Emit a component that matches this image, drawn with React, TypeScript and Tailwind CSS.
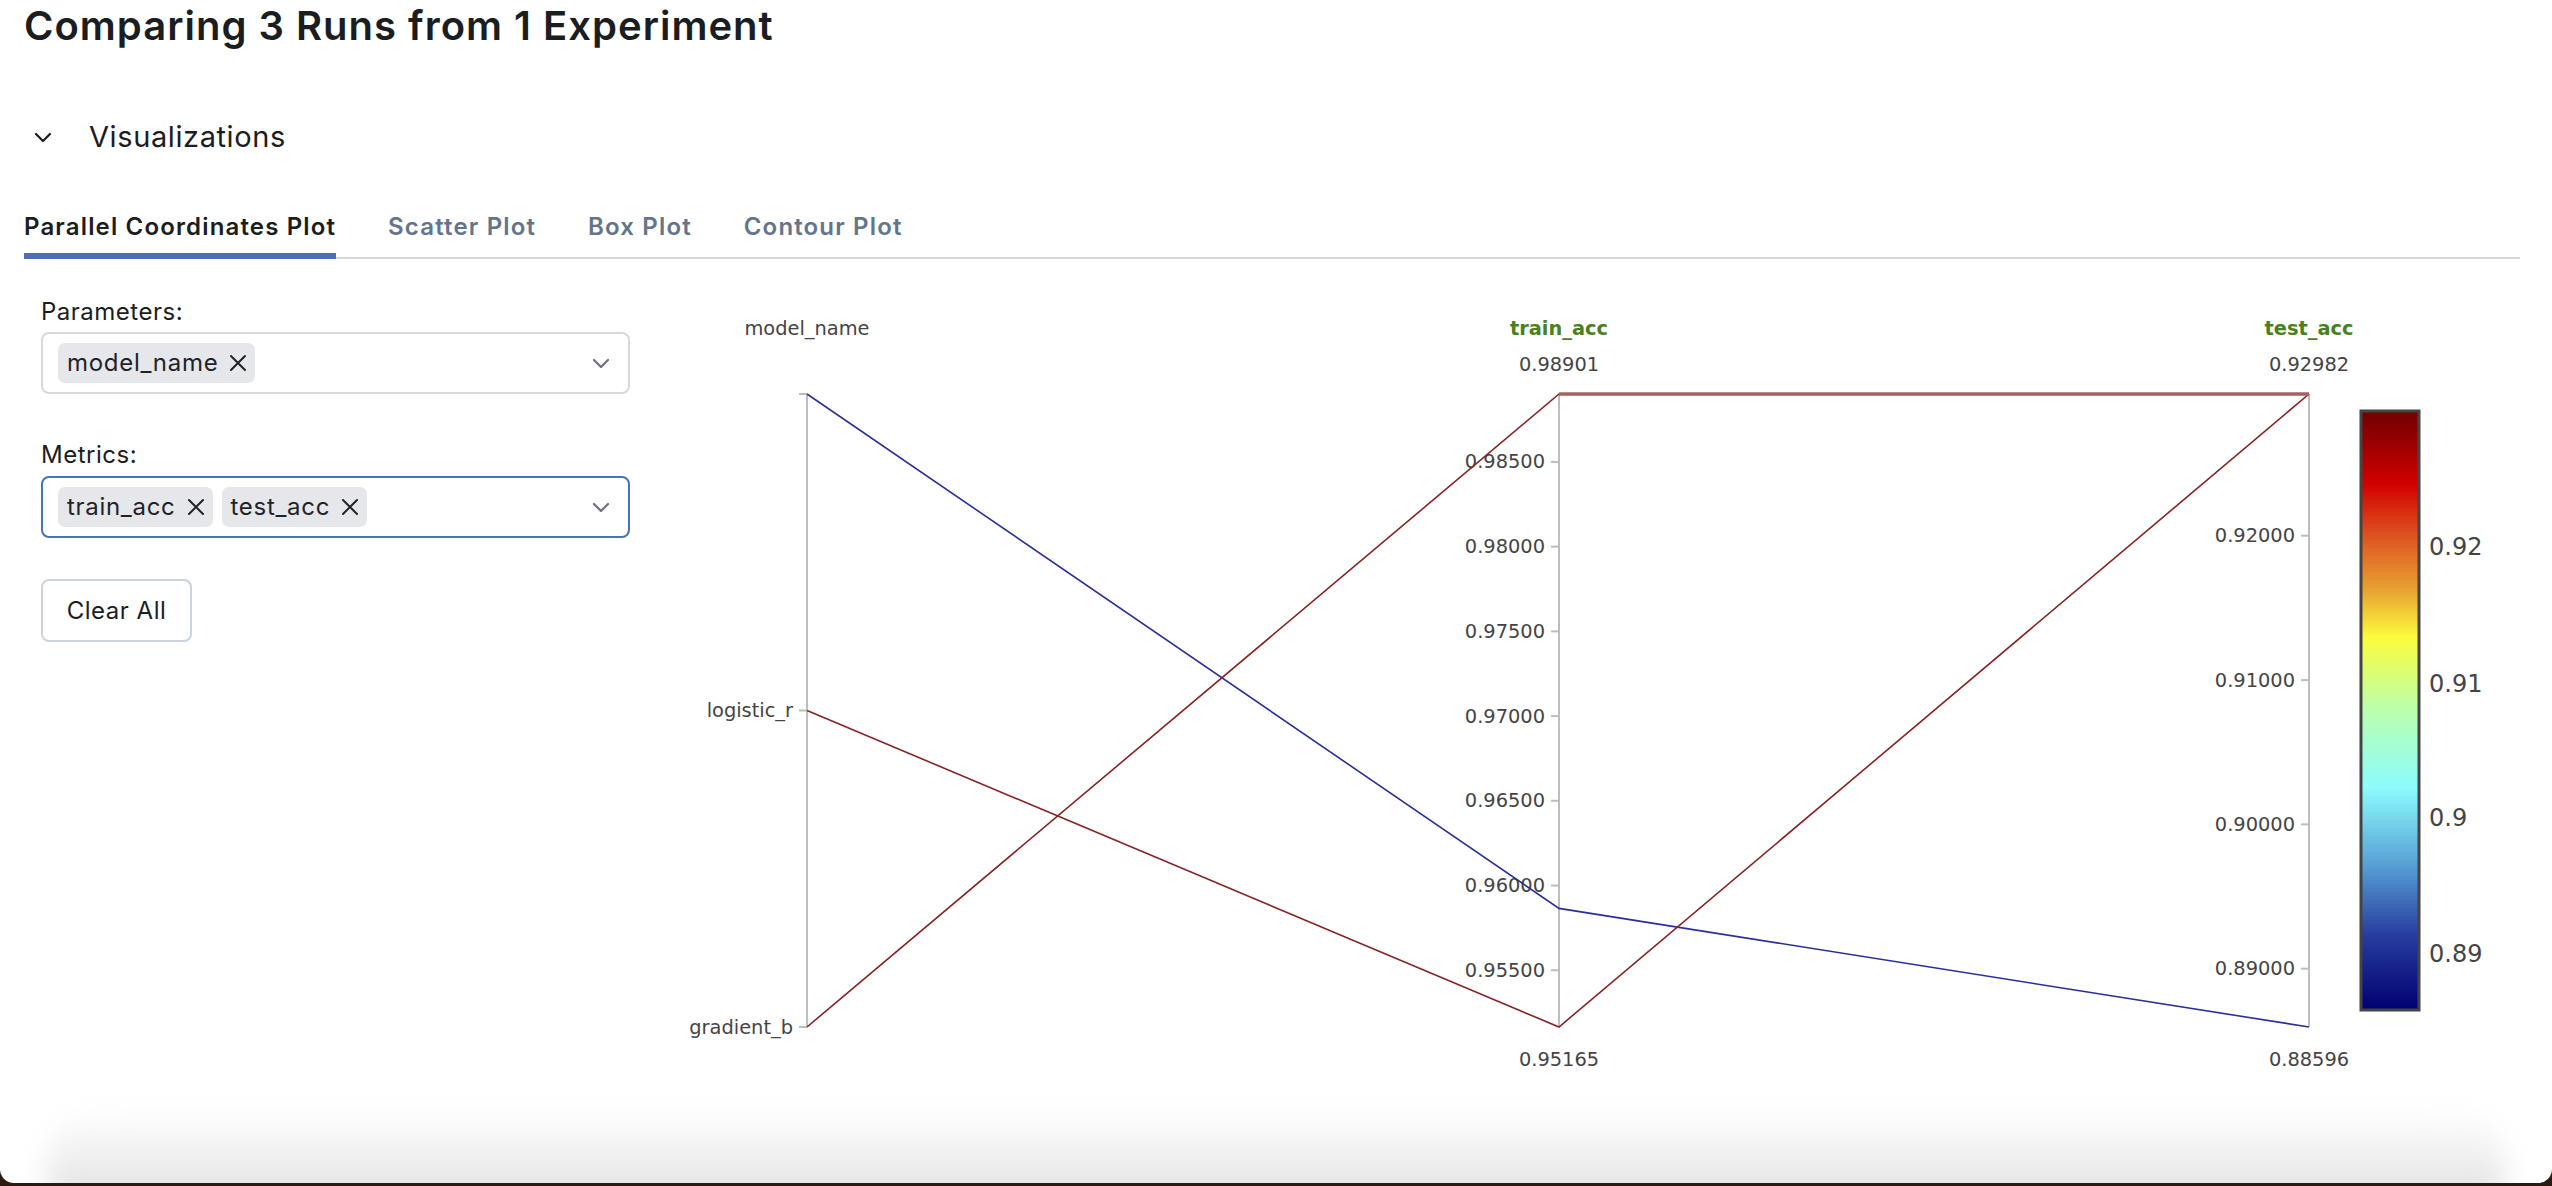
import React from "react";

// plot geometry, page pixels
const AXIS_TOP = 393;
const AXIS_BOTTOM = 1026;
const X_MODEL = 807;
const X_TRAIN = 1559;
const X_TEST = 2309;

const scale = (hi: number, lo: number) => (v: number) =>
  AXIS_TOP + ((hi - v) / (hi - lo)) * (AXIS_BOTTOM - AXIS_TOP);

const yTrain = scale(0.98901, 0.95165);
const yTest = scale(0.92982, 0.88596);
const yModel = (i: number) => AXIS_BOTTOM - i * ((AXIS_BOTTOM - AXIS_TOP) / 2);

const trainTicks = [0.985, 0.98, 0.975, 0.97, 0.965, 0.96, 0.955];
const testTicks = [0.92, 0.91, 0.9, 0.89];

const runs = [
  { model: 2, train: 0.95865, test: 0.88596, color: "#2b2f98" },
  { model: 1, train: 0.95165, test: 0.92982, color: "#862424" },
  { model: 0, train: 0.98901, test: 0.92982, color: "#862424" },
];

const plotFont = "'DejaVu Sans', Verdana, sans-serif";

const Chip = ({ label }: { label: string }) => (
  <span className="flex h-[40px] items-center gap-[11px] rounded-[7px] bg-[#e5e7eb] pl-[9px] pr-[8px] text-[24px] tracking-[0.7px] text-[#1f2328]">
    {label}
    <svg width="18" height="18" viewBox="0 0 18 18">
      <path d="M2 2 16 16M16 2 2 16" stroke="#1f2328" strokeWidth="2" strokeLinecap="round" />
    </svg>
  </span>
);

const Chevron = ({ className }: { className?: string }) => (
  <svg width="18" height="11" viewBox="0 0 18 11" className={className}>
    <path d="M2 2 9 9 16 2" fill="none" stroke="currentColor" strokeWidth="2.2" strokeLinecap="round" strokeLinejoin="round" />
  </svg>
);

const MultiSelect = ({ items, focused }: { items: string[]; focused?: boolean }) => (
  <div
    className={`flex h-[62px] items-center justify-between rounded-[8px] border-[2px] bg-white pl-[15px] pr-[18px] ${
      focused ? "border-[#4a72b8]" : "border-[#d6d9de]"
    }`}
  >
    <div className="flex gap-[9px]">
      {items.map((it) => (
        <Chip key={it} label={it} />
      ))}
    </div>
    <Chevron className="text-[#6b7280]" />
  </div>
);

const ParallelPlot = () => (
  <svg width="1890" height="820" viewBox="630 270 1890 820" className="shrink-0">
    <defs>
      <linearGradient id="jet" x1="0" y1="0" x2="0" y2="1">
        <stop offset="0" stopColor="#700000" />
        <stop offset="0.122" stopColor="#d20000" />
        <stop offset="0.2" stopColor="#dc4c1e" />
        <stop offset="0.3" stopColor="#e8a232" />
        <stop offset="0.378" stopColor="#fcfc3c" />
        <stop offset="0.5" stopColor="#b9ffae" />
        <stop offset="0.628" stopColor="#8cfcfc" />
        <stop offset="0.75" stopColor="#5aa6d8" />
        <stop offset="0.875" stopColor="#283d9e" />
        <stop offset="1" stopColor="#000074" />
      </linearGradient>
    </defs>

    {/* axes */}
    {[X_MODEL, X_TRAIN, X_TEST].map((x) => (
      <line key={x} x1={x} y1={AXIS_TOP} x2={x} y2={AXIS_BOTTOM} stroke="#bdbdbd" strokeWidth="2" />
    ))}

    {/* model_name ticks */}
    {[0, 1, 2].map((i) => (
      <line key={i} x1={X_MODEL - 8} y1={yModel(i)} x2={X_MODEL} y2={yModel(i)} stroke="#bdbdbd" strokeWidth="2" />
    ))}
    <g fontFamily={plotFont} fontSize="19.4" fill="#444" textAnchor="end" dominantBaseline="central">
      <text x={X_MODEL - 14} y={yModel(1)}>logistic_r</text>
      <text x={X_MODEL - 14} y={yModel(0)}>gradient_b</text>
    </g>

    {/* train ticks */}
    {trainTicks.map((t) => (
      <g key={t}>
        <line x1={X_TRAIN - 8} y1={yTrain(t)} x2={X_TRAIN} y2={yTrain(t)} stroke="#bdbdbd" strokeWidth="2" />
        <text x={X_TRAIN - 14} y={yTrain(t)} fontFamily={plotFont} fontSize="19.4" fill="#444" textAnchor="end" dominantBaseline="central">
          {t.toFixed(5)}
        </text>
      </g>
    ))}

    {/* test ticks */}
    {testTicks.map((t) => (
      <g key={t}>
        <line x1={X_TEST - 8} y1={yTest(t)} x2={X_TEST} y2={yTest(t)} stroke="#bdbdbd" strokeWidth="2" />
        <text x={X_TEST - 14} y={yTest(t)} fontFamily={plotFont} fontSize="19.4" fill="#444" textAnchor="end" dominantBaseline="central">
          {t.toFixed(5)}
        </text>
      </g>
    ))}

    {/* runs */}
    {runs.map((r, i) => (
      <polyline
        key={i}
        points={`${X_MODEL},${yModel(r.model)} ${X_TRAIN},${yTrain(r.train)} ${X_TEST},${yTest(r.test)}`}
        fill="none"
        stroke={r.color}
        strokeWidth="1.6"
      />
    ))}
    <line x1={X_TRAIN} y1={AXIS_TOP} x2={X_TEST} y2={AXIS_TOP} stroke="#a66262" strokeWidth="3.4" />

    {/* titles and range labels */}
    <g fontFamily={plotFont} fontSize="19.4" textAnchor="middle" dominantBaseline="central">
      <text x={X_MODEL} y={327} fill="#444">model_name</text>
      <text x={X_TRAIN} y={327} fill="#4b801e" fontWeight="bold">train_acc</text>
      <text x={X_TEST} y={327} fill="#4b801e" fontWeight="bold">test_acc</text>
      <text x={X_TRAIN} y={363} fill="#444">0.98901</text>
      <text x={X_TEST} y={363} fill="#444">0.92982</text>
      <text x={X_TRAIN} y={1058} fill="#444">0.95165</text>
      <text x={X_TEST} y={1058} fill="#444">0.88596</text>
    </g>

    {/* colorbar */}
    <rect x={2361} y={410} width={58} height={599} fill="url(#jet)" stroke="#444" strokeWidth="3" />
    <g fontFamily={plotFont} fontSize="24" fill="#444" dominantBaseline="central">
      <text x={2429} y={546}>0.92</text>
      <text x={2429} y={683}>0.91</text>
      <text x={2429} y={817}>0.9</text>
      <text x={2429} y={953}>0.89</text>
    </g>
  </svg>
);

const tabs = ["Parallel Coordinates Plot", "Scatter Plot", "Box Plot", "Contour Plot"];

export default function App() {
  return (
    <div className="h-[1186px] overflow-hidden bg-[#2a1a0f]" style={{ fontFamily: "Inter, 'Noto Sans', sans-serif" }}>
      <div className="flex h-[1183px] flex-col overflow-hidden rounded-b-[14px] bg-white">
        <div className="pl-[24px] pr-[32px]">
          <h1 className="mt-[3px] text-[40px] font-semibold leading-[46px] tracking-[1px] text-[#1a1d21]">
            Comparing 3 Runs from 1 Experiment
          </h1>

          {/* section header */}
          <div className="mt-[69px] flex h-[38px] items-center">
            <Chevron className="ml-[10px] text-[#1a1d21]" />
            <span className="ml-[37px] text-[29px] leading-[38px] tracking-[0.6px] text-[#1a1d21]">Visualizations</span>
          </div>

          {/* tabs */}
          <div className="mt-[55px] flex gap-[52px] border-b-[2px] border-[#d5d8dc]">
            {tabs.map((t, i) => (
              <div
                key={t}
                className={`-mb-[2px] text-[24px] font-semibold leading-[32px] tracking-[1.15px] ${
                  i === 0 ? "border-b-[6px] border-[#4a6fb5] pb-[10px] text-[#1a1d21]" : "pb-[16px] text-[#64748b]"
                }`}
              >
                {t}
              </div>
            ))}
          </div>
        </div>

        {/* controls + plot */}
        <div className="mt-[12px] flex pl-[24px]">
          <div className="w-[606px] shrink-0 pl-[17px] pt-[25px]">
            <div className="text-[24px] leading-[32px] tracking-[0.5px] text-[#1a1d21]">Parameters:</div>
            <div className="mt-[4px] w-[589px]">
              <MultiSelect items={["model_name"]} />
            </div>
            <div className="mt-[45px] text-[24px] leading-[32px] tracking-[0.5px] text-[#1a1d21]">Metrics:</div>
            <div className="mt-[5px] w-[589px]">
              <MultiSelect items={["train_acc", "test_acc"]} focused />
            </div>
            <button className="mt-[41px] h-[63px] w-[151px] rounded-[8px] border-[2px] border-[#ccd3dc] bg-white text-[24px] tracking-[0.5px] text-[#1a1d21]">
              Clear All
            </button>
          </div>
          <ParallelPlot />
        </div>

        {/* window drop shadow at the bottom */}
        <div className="mt-auto flex h-[88px] justify-center overflow-hidden">
          <div className="mt-[14px] h-[120px] w-[2460px] rounded-[60px] bg-gradient-to-b from-white to-[#d8d8d8] blur-[14px]" />
        </div>
      </div>
    </div>
  );
}
